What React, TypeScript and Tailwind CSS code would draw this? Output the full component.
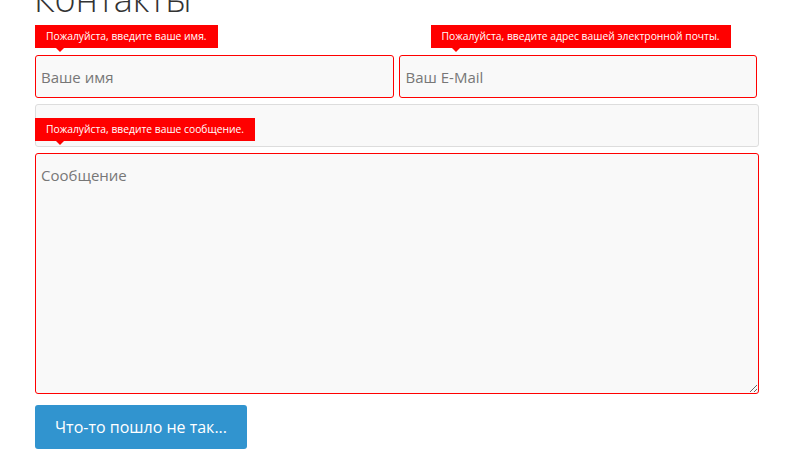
import React from "react";

function Tip({ text, className }: { text: string; className: string }) {
  return (
    <div className={"absolute z-10 bg-[#ff0000] text-white text-[10.3px] leading-[23px] h-[23px] px-[11px] whitespace-nowrap " + className}>
      {text}
      <span className="absolute left-[21px] top-[23px] w-0 h-0 border-l-[4px] border-r-[4px] border-t-[4px] border-l-transparent border-r-transparent border-t-[#ff0000]" />
    </div>
  );
}

export default function App() {
  return (
    <div className="w-[796px] h-[475px] overflow-hidden bg-white" style={{ fontFamily: '"Open Sans", "Noto Sans", sans-serif' }}>
      <div className="pl-[35px] w-[759px] flex flex-col">
        <h1 className="text-[36px] font-light leading-[40px] text-[#333] mt-[-21px] ml-[-1px]">Контакты</h1>
        <div className="flex gap-[5px] mt-[36px] pr-[2px]">
          <div className="relative flex-1">
            <Tip text="Пожалуйста, введите ваше имя." className="left-0 top-[-30px]" />
            <input
              className="w-full h-[43px] bg-[#f9f9f9] border border-[#ff0000] rounded-[3px] px-[5px] text-[15px] text-[#555] placeholder:text-[#777] outline-none"
              placeholder="Ваше имя"
            />
          </div>
          <div className="relative flex-1">
            <Tip text="Пожалуйста, введите адрес вашей электронной почты." className="left-[32px] top-[-30px]" />
            <input
              className="w-full h-[43px] bg-[#f9f9f9] border border-[#ff0000] rounded-[3px] px-[6px] text-[15px] text-[#555] placeholder:text-[#777] outline-none"
              placeholder="Ваш E-Mail"
            />
          </div>
        </div>
        <div className="mt-[6px] h-[43px] bg-[#f9f9f9] border border-[#dddddd] rounded-[3px]" />
        <div className="relative mt-[6px]">
          <Tip text="Пожалуйста, введите ваше сообщение." className="left-0 top-[-35px]" />
          <textarea
            className="block w-full h-[241px] bg-[#f9f9f9] border border-[#ff0000] rounded-[3px] px-[5px] py-[10px] text-[15px] text-[#555] placeholder:text-[#777] outline-none"
            placeholder="Сообщение"
          />
        </div>
        <div className="mt-[11px] flex">
          <button className="h-[44px] px-[20px] bg-[#3194cf] text-white text-[16px] rounded-[3px]">
            Что-то пошло не так...
          </button>
        </div>
      </div>
    </div>
  );
}
